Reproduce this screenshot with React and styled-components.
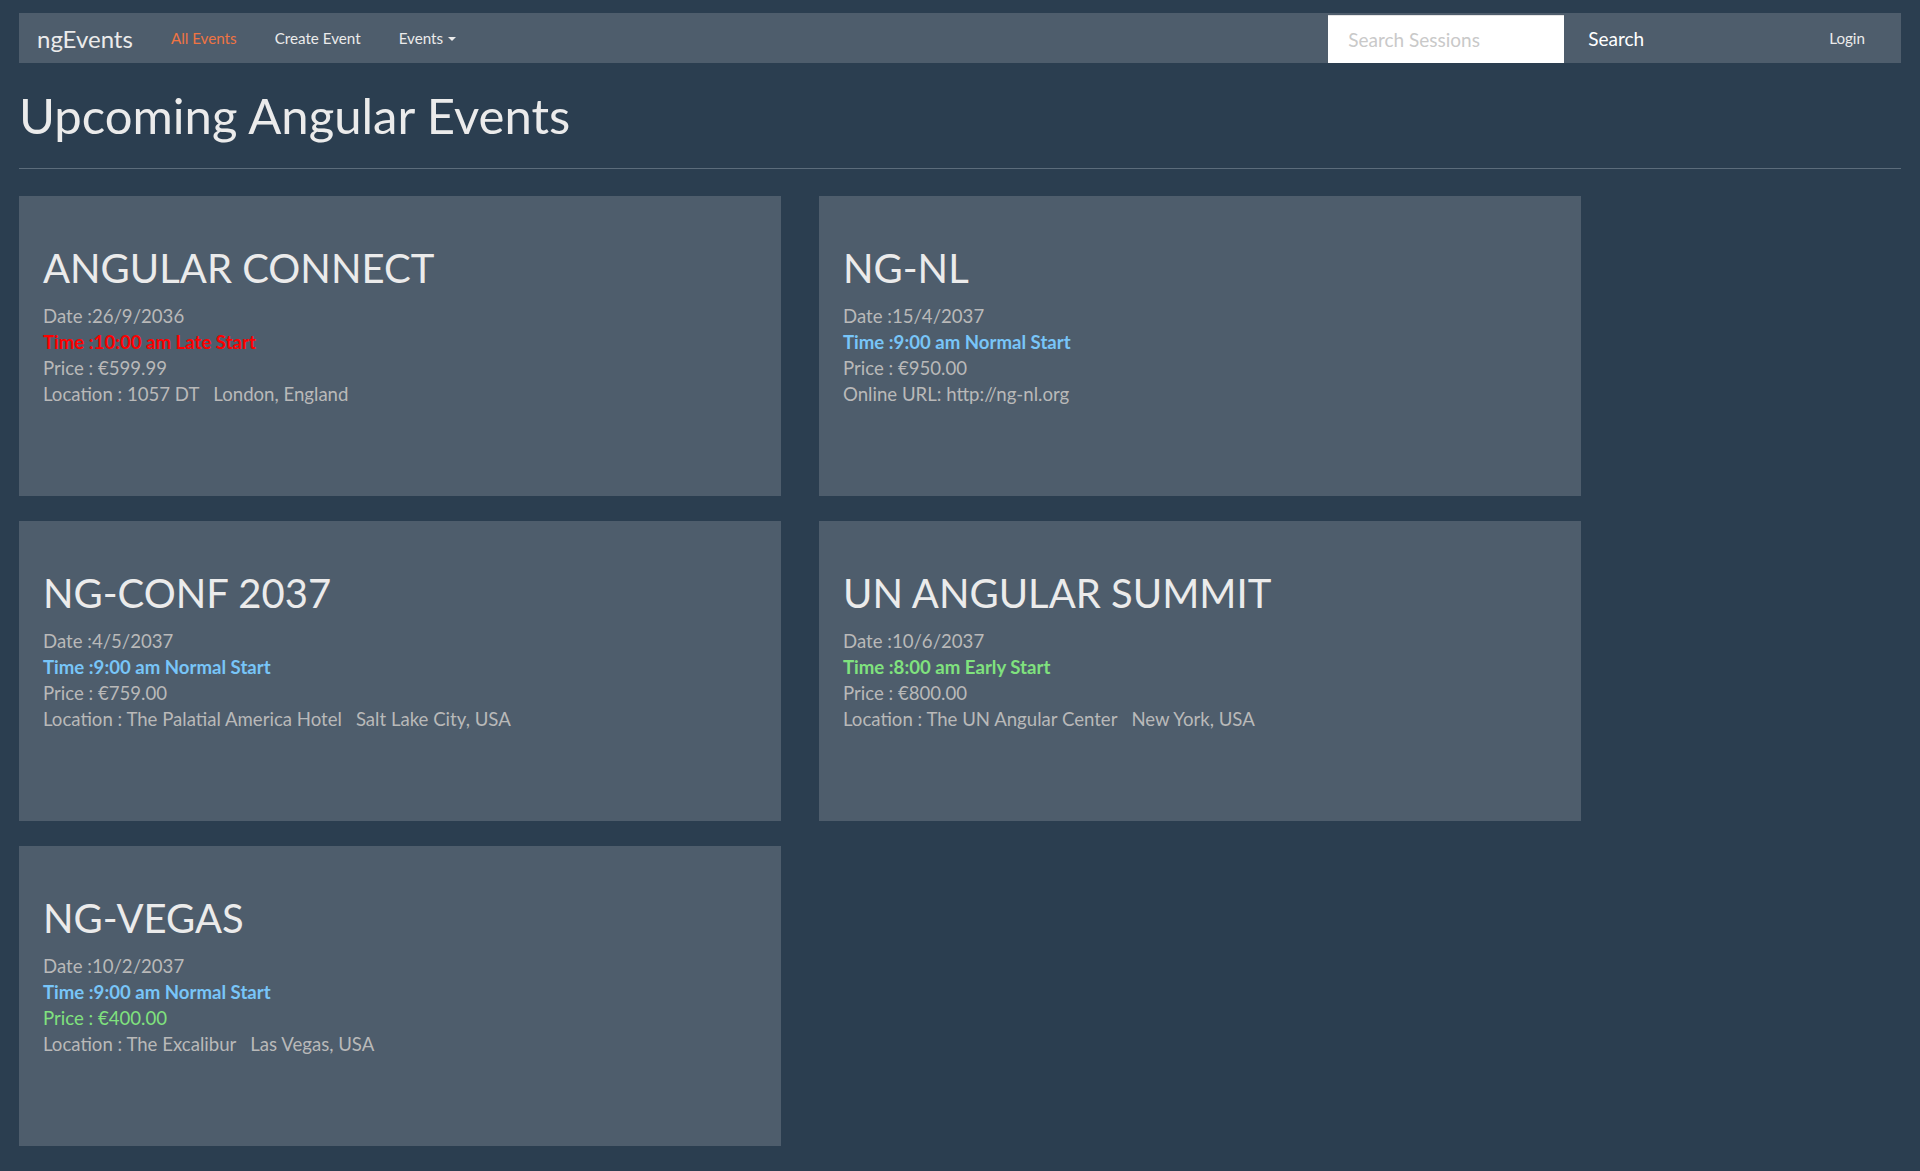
import React from 'react';
import styled, { createGlobalStyle } from 'styled-components';

const colors = {
  page: '#2b3e50',
  panel: '#4e5d6c',
  text: '#ebebeb',
  muted: '#b9b9b9',
  orange: '#ef7443',
  red: '#ff0000',
  blue: '#78c5f8',
  green: '#80e27e',
  rule: '#5c6c7b',
};

const GlobalStyle = createGlobalStyle`
  html, body {
    margin: 0;
    padding: 0;
    background-color: ${colors.page};
    font-family: Lato, "Open Sans", sans-serif;
    color: ${colors.text};
  }
`;

const Page = styled.div`
  padding: 13px 19px 25px;
`;

const NavBar = styled.nav`
  height: 50px;
  background-color: ${colors.panel};
  display: flex;
  align-items: center;
  padding-right: 17px;
`;

const Brand = styled.a`
  font-size: 24px;
  color: ${colors.text};
  padding: 0 19px 0 18px;
  text-decoration: none;
`;

const NavLink = styled.a`
  font-size: 15.2px;
  color: ${(p) => (p.$active ? colors.orange : colors.text)};
  padding: 0 19px;
  text-decoration: none;
  display: flex;
  align-items: center;
`;

const Caret = styled.span`
  display: inline-block;
  width: 0;
  height: 0;
  margin-left: 5px;
  margin-top: 2px;
  border-top: 4px solid ${colors.text};
  border-left: 4px solid transparent;
  border-right: 4px solid transparent;
`;

const SearchForm = styled.form`
  margin-left: auto;
  margin-right: 142px;
  display: flex;
  align-items: center;
  height: 50px;
`;

const SearchInput = styled.input`
  width: 236px;
  height: 48px;
  box-sizing: border-box;
  margin-top: 1px;
  border: none;
  border-top: 1px solid #e4e4e4;
  outline: none;
  background: #fff;
  padding: 0 20px;
  font-family: Lato, sans-serif;
  font-size: 19px;
  color: #333;

  &::placeholder {
    color: #c9c9c9;
  }
`;

const SearchButton = styled.button`
  background: none;
  border: none;
  color: #fff;
  font-family: Lato, sans-serif;
  font-size: 19px;
  padding: 0 24px;
  height: 50px;
  cursor: pointer;
`;

const Header = styled.div`
  padding-bottom: 25px;
  border-bottom: 1px solid ${colors.rule};
  margin-bottom: 27px;
`;

const Title = styled.h1`
  margin: 26px 0 0;
  font-size: 49px;
  line-height: 1.1;
  font-weight: 400;
  color: ${colors.text};
`;

const Grid = styled.div`
  display: grid;
  grid-template-columns: repeat(2, 762px);
  column-gap: 38px;
  row-gap: 25px;
`;

const Card = styled.div`
  height: 300px;
  box-sizing: border-box;
  background-color: ${colors.panel};
  padding: 28px 24px;
`;

const CardTitle = styled.h2`
  margin: 22.5px 0 12.5px;
  font-size: 40px;
  line-height: 1.1;
  font-weight: 400;
  color: ${colors.text};
`;

const Line = styled.div`
  font-size: 18.6px;
  line-height: 26px;
  color: ${(p) => p.$color || colors.muted};
  font-weight: ${(p) => (p.$bold ? 700 : 400)};
`;

const City = styled.span`
  margin-left: 14px;
`;

const events = [
  {
    name: 'ANGULAR CONNECT',
    date: '26/9/2036',
    time: '10:00 am',
    price: '€599.99',
    location: { address: '1057 DT', city: 'London', country: 'England' },
  },
  {
    name: 'NG-NL',
    date: '15/4/2037',
    time: '9:00 am',
    price: '€950.00',
    onlineUrl: 'http://ng-nl.org',
  },
  {
    name: 'NG-CONF 2037',
    date: '4/5/2037',
    time: '9:00 am',
    price: '€759.00',
    location: { address: 'The Palatial America Hotel', city: 'Salt Lake City', country: 'USA' },
  },
  {
    name: 'UN ANGULAR SUMMIT',
    date: '10/6/2037',
    time: '8:00 am',
    price: '€800.00',
    location: { address: 'The UN Angular Center', city: 'New York', country: 'USA' },
  },
  {
    name: 'NG-VEGAS',
    date: '10/2/2037',
    time: '9:00 am',
    price: '€400.00',
    cheap: true,
    location: { address: 'The Excalibur', city: 'Las Vegas', country: 'USA' },
  },
];

const startInfo = (time) => {
  if (time === '8:00 am') return { label: 'Early Start', color: colors.green };
  if (time === '10:00 am') return { label: 'Late Start', color: colors.red };
  return { label: 'Normal Start', color: colors.blue };
};

const EventCard = ({ event }) => {
  const start = startInfo(event.time);
  return (
    <Card>
      <CardTitle>{event.name}</CardTitle>
      <Line>Date :{event.date}</Line>
      <Line $bold $color={start.color}>
        Time :{event.time} {start.label}
      </Line>
      <Line $color={event.cheap ? colors.green : undefined}>Price : {event.price}</Line>
      {event.location ? (
        <Line>
          Location : {event.location.address}
          <City>
            {event.location.city}, {event.location.country}
          </City>
        </Line>
      ) : (
        <Line>Online URL: {event.onlineUrl}</Line>
      )}
    </Card>
  );
};

const App = () => {
  return (
    <>
      <GlobalStyle />
      <Page>
        <NavBar>
          <Brand href="#">ngEvents</Brand>
          <NavLink href="#" $active>All Events</NavLink>
          <NavLink href="#">Create Event</NavLink>
          <NavLink href="#">
            Events
            <Caret />
          </NavLink>
          <SearchForm onSubmit={(e) => e.preventDefault()}>
            <SearchInput placeholder="Search Sessions" />
            <SearchButton type="submit">Search</SearchButton>
          </SearchForm>
          <NavLink href="#">Login</NavLink>
        </NavBar>
        <Header>
          <Title>Upcoming Angular Events</Title>
        </Header>
        <Grid>
          {events.map((ev) => (
            <EventCard key={ev.name} event={ev} />
          ))}
        </Grid>
      </Page>
    </>
  );
};

export default App;
